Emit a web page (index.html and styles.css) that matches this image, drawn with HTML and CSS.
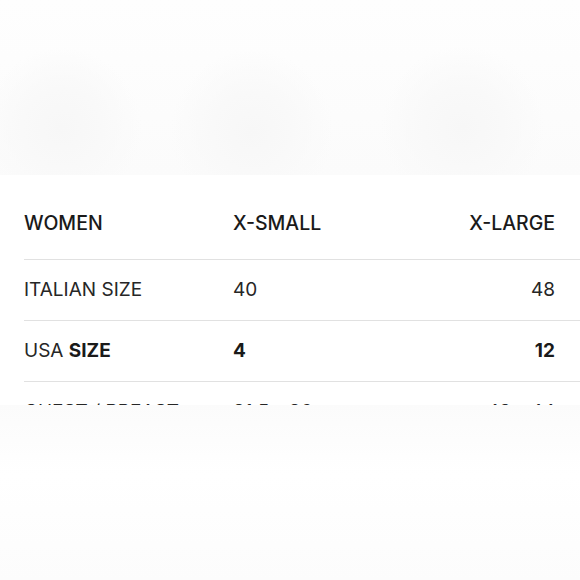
FILE: index.html
```html
<!DOCTYPE html>
<html>
<head>
<meta charset="utf-8">
<link rel="stylesheet" href="styles.css">
</head>
<body>
<div class="page">
  <div class="top-band"></div>
  <div class="chart">
    <div class="row head">
      <div class="cell">WOMEN</div>
      <div class="cell">X-SMALL</div>
      <div class="cell end">X-LARGE</div>
    </div>
    <div class="row">
      <div class="cell">ITALIAN SIZE</div>
      <div class="cell">40</div>
      <div class="cell end">48</div>
    </div>
    <div class="row">
      <div class="cell">USA <b>SIZE</b></div>
      <div class="cell"><b>4</b></div>
      <div class="cell end"><b>12</b></div>
    </div>
    <div class="row">
      <div class="cell">CHEST / BREAST</div>
      <div class="cell">81.5 - 86</div>
      <div class="cell end">43 - 44</div>
    </div>
  </div>
  <div class="bottom-band"></div>
</div>
</body>
</html>
```
FILE: styles.css
```css
html, body {
  margin: 0;
  padding: 0;
  background: #ffffff;
}
.page {
  width: 580px;
  height: 580px;
  overflow: hidden;
  display: flex;
  flex-direction: column;
  font-family: Inter, "Liberation Sans", sans-serif;
  color: #1f1f1f;
}
.top-band {
  height: 175px;
  flex: none;
  background:
    radial-gradient(circle at 62px 128px, #f7f7f7 0, #f9f9f9 40px, rgba(250,250,250,0) 80px),
    radial-gradient(circle at 252px 132px, #f7f7f7 0, #f9f9f9 40px, rgba(250,250,250,0) 82px),
    radial-gradient(circle at 463px 128px, #f7f7f7 0, #f9f9f9 40px, rgba(250,250,250,0) 82px),
    linear-gradient(#fefefe, #fbfbfb);
}
.chart {
  height: 230px;
  flex: none;
  overflow: hidden;
  background: #ffffff;
}
.row {
  display: grid;
  grid-template-columns: 209px 1fr auto;
  align-items: center;
  margin-left: 24px;
  padding-right: 25px;
  height: 60px;
  border-bottom: 1px solid #e1e1e1;
  font-size: 19px;
  font-weight: 400;
  line-height: 24px;
  color: #262626;
}
.row.head {
  align-items: end;
  padding-bottom: 24px;
  box-sizing: border-box;
  height: 85px;
  font-size: 19.5px;
  font-weight: 500;
  color: #1a1a1a;
}
.cell.end {
  text-align: right;
}
.row b {
  font-weight: 700;
  color: #1a1a1a;
}
.bottom-band {
  flex: 1;
  background:
    radial-gradient(ellipse 200px 120px at 110px 600px, #f1f1f1 0, rgba(245,245,245,0) 100%),
    radial-gradient(ellipse 160px 120px at 560px 590px, #f6f6f6 0, rgba(248,248,248,0) 100%),
    linear-gradient(#fbfbfb, #ffffff 40%, #fcfcfc);
}
```
